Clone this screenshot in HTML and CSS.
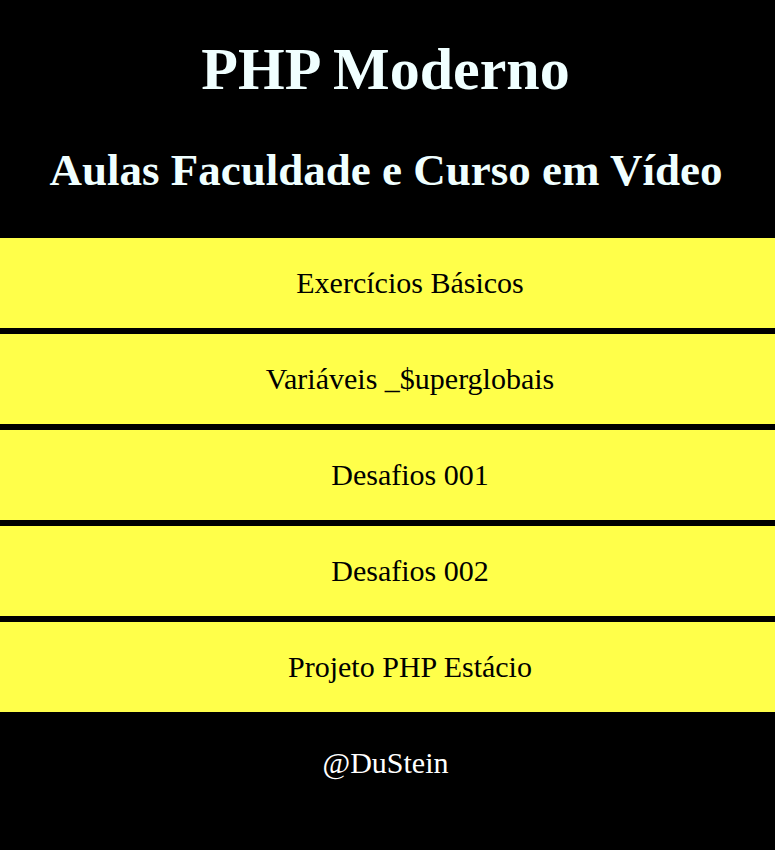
FILE: index.html
```html
<!DOCTYPE html>
<html lang="pt-BR">
<head>
<meta charset="utf-8">
<title>PHP Moderno</title>
<link rel="stylesheet" href="styles.css">
</head>
<body>
<header class="site-header">
  <h1 class="title">PHP Moderno</h1>
  <h2 class="subtitle">Aulas Faculdade e Curso em Vídeo</h2>
</header>
<nav class="menu">
  <a class="menu-item" href="#">Exercícios Básicos</a>
  <a class="menu-item" href="#">Variáveis _$uperglobais</a>
  <a class="menu-item" href="#">Desafios 001</a>
  <a class="menu-item" href="#">Desafios 002</a>
  <a class="menu-item" href="#">Projeto PHP Estácio</a>
</nav>
<footer class="site-footer">@DuStein</footer>
</body>
</html>
```
FILE: styles.css
```css
html, body {
  margin: 0;
  padding: 0;
  background: #000;
  font-family: "Liberation Serif", "Times New Roman", serif;
}
.site-header {
  text-align: center;
  color: #f0ffff;
  padding: 35px 0 42px;
}
.title {
  font-size: 60px;
  font-weight: bold;
  margin: 0;
  padding-right: 4px;
}
.subtitle {
  font-size: 45px;
  font-weight: bold;
  margin: 40px 0 0;
  padding-right: 3px;
}
.menu {
  display: flex;
  flex-direction: column;
  gap: 6px;
}
.menu-item {
  display: flex;
  align-items: center;
  justify-content: center;
  height: 90px;
  padding-left: 45px;
  background: #ffff4a;
  color: #000;
  font-size: 30px;
  text-decoration: none;
}
.site-footer {
  text-align: center;
  color: #fff;
  font-size: 30px;
  padding: 34px 4px 60px 0;
}
```
